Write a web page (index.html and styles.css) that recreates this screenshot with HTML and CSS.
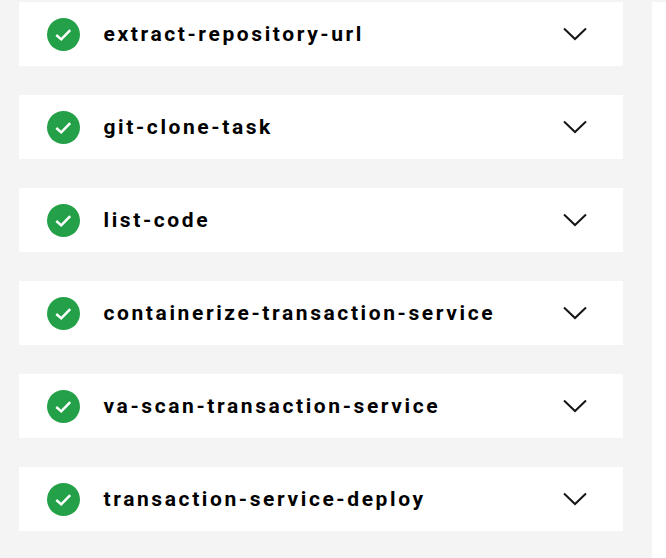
FILE: index.html
```html
<!DOCTYPE html>
<html>
<head>
    <meta charset="UTF-8">
    <title>Tasks</title>
    <link rel="stylesheet" href="styles.css">
</head>
<body>
<div class="page">
    <div class="list">
        <div class="row">
            <svg class="status" viewBox="0 0 32 32"><circle cx="16" cy="16" r="16" fill="#24a148"/><path d="M9 16.500l4.800 4.200 8.700-9" fill="none" stroke="#fff" stroke-width="2.400"/></svg>
            <span class="name">extract-repository-url</span>
            <svg class="arrow" viewBox="0 0 24 14"><path d="M1 1.500l11 10.500 11-10.500" fill="none" stroke="#161616" stroke-width="2"/></svg>
        </div>
        <div class="row">
            <svg class="status" viewBox="0 0 32 32"><circle cx="16" cy="16" r="16" fill="#24a148"/><path d="M9 16.500l4.800 4.200 8.700-9" fill="none" stroke="#fff" stroke-width="2.400"/></svg>
            <span class="name">git-clone-task</span>
            <svg class="arrow" viewBox="0 0 24 14"><path d="M1 1.500l11 10.500 11-10.500" fill="none" stroke="#161616" stroke-width="2"/></svg>
        </div>
        <div class="row">
            <svg class="status" viewBox="0 0 32 32"><circle cx="16" cy="16" r="16" fill="#24a148"/><path d="M9 16.500l4.800 4.200 8.700-9" fill="none" stroke="#fff" stroke-width="2.400"/></svg>
            <span class="name">list-code</span>
            <svg class="arrow" viewBox="0 0 24 14"><path d="M1 1.500l11 10.500 11-10.500" fill="none" stroke="#161616" stroke-width="2"/></svg>
        </div>
        <div class="row">
            <svg class="status" viewBox="0 0 32 32"><circle cx="16" cy="16" r="16" fill="#24a148"/><path d="M9 16.500l4.800 4.200 8.700-9" fill="none" stroke="#fff" stroke-width="2.400"/></svg>
            <span class="name">containerize-transaction-service</span>
            <svg class="arrow" viewBox="0 0 24 14"><path d="M1 1.500l11 10.500 11-10.500" fill="none" stroke="#161616" stroke-width="2"/></svg>
        </div>
        <div class="row">
            <svg class="status" viewBox="0 0 32 32"><circle cx="16" cy="16" r="16" fill="#24a148"/><path d="M9 16.500l4.800 4.200 8.700-9" fill="none" stroke="#fff" stroke-width="2.400"/></svg>
            <span class="name">va-scan-transaction-service</span>
            <svg class="arrow" viewBox="0 0 24 14"><path d="M1 1.500l11 10.500 11-10.500" fill="none" stroke="#161616" stroke-width="2"/></svg>
        </div>
        <div class="row">
            <svg class="status" viewBox="0 0 32 32"><circle cx="16" cy="16" r="16" fill="#24a148"/><path d="M9 16.500l4.800 4.200 8.700-9" fill="none" stroke="#fff" stroke-width="2.400"/></svg>
            <span class="name">transaction-service-deploy</span>
            <svg class="arrow" viewBox="0 0 24 14"><path d="M1 1.500l11 10.500 11-10.500" fill="none" stroke="#161616" stroke-width="2"/></svg>
        </div>
    </div>
    <div class="side"></div>
</div>
</body>
</html>
```

FILE: styles.css
```css
body { margin: 0; background: #f4f4f4; }
.page {
    height: 558px;
    overflow: hidden;
    display: flex;
    padding-top: 2px;
    box-sizing: border-box;
}
.list {
    width: 604px;
    margin-left: 19px;
    display: flex;
    flex-direction: column;
    gap: 29px;
}
.row {
    height: 64px;
    background: #fff;
    display: flex;
    align-items: center;
    padding-left: 28px;
}
.status {
    width: 33px;
    height: 33px;
    flex: none;
}
.name {
    margin-left: 23.500px;
    font-family: "Roboto", "Liberation Sans", sans-serif;
    font-size: 21px;
    font-weight: 700;
    letter-spacing: 2.600px;
    color: #000;
}
.arrow {
    width: 24px;
    height: 14px;
    margin-left: auto;
    margin-right: 36px;
    flex: none;
}
.side {
    width: 14px;
    margin-left: 29px;
    background: #fff;
}
```
